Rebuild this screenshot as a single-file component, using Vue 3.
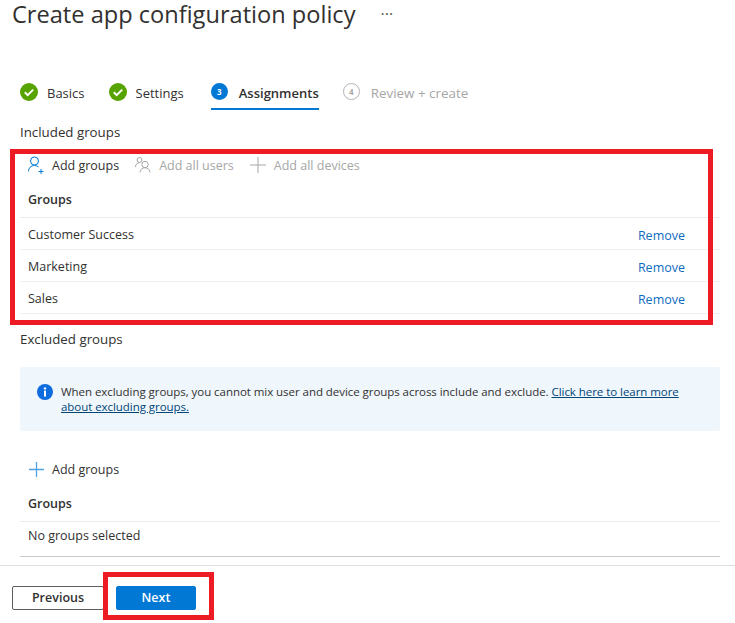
<template>
  <div class="page">
    <header class="title-row">
      <h1 class="title">Create app configuration policy</h1>
      <span class="more">···</span>
    </header>

    <nav class="steps">
      <div v-for="s in steps" :key="s.label" class="step" :class="s.state">
        <span v-if="s.state === 'done'" class="step__icon">
          <svg width="18" height="18" viewBox="0 0 18 18">
            <circle cx="9" cy="9" r="9" fill="#57a300" />
            <path d="M4.8 9.3l2.9 2.9 5.5-5.6" fill="none" stroke="#fff" stroke-width="2" />
          </svg>
        </span>
        <span v-else class="step__num">{{ s.num }}</span>
        <span class="step__label">{{ s.label }}</span>
      </div>
    </nav>

    <div class="section-label included-label">Included groups</div>

    <section class="included">
      <div class="toolbar">
        <button class="tool">
          <svg width="16" height="18" viewBox="0 0 16 18" fill="none" stroke="#0078d4" stroke-width="1">
            <circle cx="6.5" cy="5" r="4" />
            <path d="M.5 15.500c0-3.500 2.400-6 6-6 1.600 0 3 .5 4 1.400" />
            <path d="M10.500 15.500h5M13 13v5" />
          </svg>
          <span>Add groups</span>
        </button>
        <button class="tool tool--off">
          <svg width="16" height="16" viewBox="0 0 16 16" fill="none" stroke="#a6a6a6" stroke-width="1">
            <circle cx="4.500" cy="3" r="2.500" />
            <path d="M.5 10c0-2.600 1.600-4.300 4-4.300" />
            <circle cx="10" cy="7.500" r="3.200" />
            <path d="M5 15.500c0-2.800 2.200-4.800 5-4.800s5 2 5 4.800" />
          </svg>
          <span>Add all users</span>
        </button>
        <button class="tool tool--off">
          <svg width="16" height="16" viewBox="0 0 16 16" stroke="#a6a6a6" stroke-width="1">
            <path d="M0 8h16M8 0v16" />
          </svg>
          <span>Add all devices</span>
        </button>
      </div>
      <div class="table-head">Groups</div>
      <div v-for="g in groups" :key="g" class="table-row">
        <span>{{ g }}</span>
        <a class="remove">Remove</a>
      </div>
    </section>

    <div class="section-label excluded-label">Excluded groups</div>

    <div class="info">
      <svg class="info__icon" width="16" height="16" viewBox="0 0 16 16">
        <circle cx="8" cy="8" r="8" fill="#0f6cde" />
        <rect x="7" y="6.600" width="2" height="6" fill="#fff" />
        <circle cx="8" cy="4.400" r="1.200" fill="#fff" />
      </svg>
      <p class="info__text">
        When excluding groups, you cannot mix user and device groups across include and exclude.
        <a class="info__link">Click here to learn more about excluding groups.</a>
      </p>
    </div>

    <div class="excluded">
      <button class="tool tool--add">
        <svg width="15" height="15" viewBox="0 0 15 15" stroke="#4da3e3" stroke-width="1.300">
          <path d="M0 7.500h15M7.500 0v15" />
        </svg>
        <span>Add groups</span>
      </button>
      <div class="table-head">Groups</div>
      <div class="table-row table-row--last">No groups selected</div>
    </div>

    <footer class="footer">
      <button class="btn">Previous</button>
      <button class="btn btn--primary">Next</button>
    </footer>

    <!-- red annotations drawn over the screenshot -->
    <div class="mark mark--table"></div>
    <div class="mark mark--next"></div>
  </div>
</template>

<script setup>
const steps = [
  { label: 'Basics', state: 'done' },
  { label: 'Settings', state: 'done' },
  { label: 'Assignments', state: 'active', num: 3 },
  { label: 'Review + create', state: 'todo', num: 4 }
]
const groups = ['Customer Success', 'Marketing', 'Sales']
</script>

<style scoped>
.page {
  position: relative;
  width: 735px;
  height: 623px;
  overflow: hidden;
  background: #fff;
  color: #323130;
  font-family: "Open Sans", "Noto Sans", sans-serif;
  font-size: 12.5px;
}

.title-row {
  display: flex;
  align-items: center;
  height: 28px;
  padding-left: 12px;
}
.title {
  margin: 0;
  font-size: 23.6px;
  font-weight: 400;
  line-height: 28px;
  color: #323130;
}
.more {
  margin-left: 25px;
  font-size: 16px;
  color: #605e5c;
}

.steps {
  display: flex;
  height: 30px;
  margin: 52px 0 0 20px;
}
.step {
  display: flex;
  align-items: flex-start;
  box-sizing: border-box;
  height: 30px;
  margin-right: 24px;
  font-size: 13px;
  line-height: 26px;
}
.step:nth-child(2) {
  margin-right: 27px;
}
.step__icon {
  display: block;
  height: 18px;
  margin-top: 3px;
  margin-right: 9px;
}
.step__num {
  width: 17px;
  height: 17px;
  margin-top: 3px;
  margin-right: 11px;
  border-radius: 50%;
  font-size: 8px;
  font-weight: 700;
  line-height: 17px;
  text-align: center;
}
.step.active {
  border-bottom: 2px solid #0078d4;
}
.step.active .step__num {
  background: #0078d4;
  color: #fff;
}
.step.active .step__label {
  font-weight: 600;
}
.step.todo {
  color: #a6a6a6;
  font-size: 13.4px;
}
.step.todo .step__num {
  box-sizing: border-box;
  border: 1px solid #b3b3b3;
  line-height: 15px;
}

.section-label {
  padding-left: 20px;
  font-size: 13.3px;
  line-height: 20px;
}
.included-label {
  margin-top: 12px;
}
.excluded-label {
  margin-top: 15px;
}

.included {
  margin: 10px 15px 0 20px;
}
.toolbar {
  display: flex;
  height: 26px;
  padding-left: 8px;
}
.tool {
  display: flex;
  align-items: center;
  gap: 8px;
  margin-right: 16px;
  padding: 0;
  border: 0;
  background: none;
  color: #323130;
  font: inherit;
}
.tool--off {
  color: #a6a6a6;
}
.tool--add {
  height: 24px;
  margin-left: 9px;
}

.table-head {
  display: flex;
  align-items: center;
  height: 35px;
  margin-top: 4px;
  padding-left: 8px;
  border-bottom: 1px solid #edebe9;
  font-weight: 600;
}
.table-row {
  display: flex;
  align-items: center;
  justify-content: space-between;
  height: 30px;
  padding: 1px 35px 0 8px;
  border-bottom: 1px solid #f0f0f0;
}
.table-row--last {
  height: 27px;
  padding-top: 0;
  padding-bottom: 7px;
  border-bottom: 1px solid #c8c8c8;
}
.remove {
  padding-top: 2px;
  color: #0f6cbd;
}

.info {
  display: flex;
  box-sizing: border-box;
  height: 64px;
  margin: 18px 15px 0 20px;
  padding: 17px 24px 0 17px;
  background: #eff6fc;
  border-radius: 2px;
}
.info__icon {
  flex: none;
  margin: 0 8px 0 0;
}
.info__text {
  margin: 0;
  font-size: 11.5px;
  letter-spacing: -0.05px;
  line-height: 15px;
}
.info__link {
  color: #004578;
  text-decoration: underline;
}

.excluded {
  margin: 26px 15px 0 20px;
}
.excluded .table-head {
  margin-top: 5px;
}

.footer {
  display: flex;
  align-items: flex-start;
  gap: 12px;
  box-sizing: border-box;
  height: 58px;
  margin-top: 8px;
  padding: 20px 0 0 12px;
  border-top: 1px solid #e1dfdd;
}
.btn {
  box-sizing: border-box;
  width: 92px;
  height: 24px;
  padding: 0 0 2px;
  border: 1px solid #605e5c;
  border-radius: 2px;
  background: #fff;
  color: #323130;
  font: inherit;
  font-weight: 600;
}
.btn--primary {
  width: 80px;
  border-color: #0078d4;
  background: #0078d4;
  color: #fff;
}

.mark {
  position: absolute;
  box-sizing: border-box;
  border: 5px solid #ed1c24;
  pointer-events: none;
}
.mark--table {
  left: 10px;
  top: 149px;
  width: 703px;
  height: 176px;
}
.mark--next {
  left: 103px;
  top: 572px;
  width: 111px;
  height: 48px;
}
</style>
